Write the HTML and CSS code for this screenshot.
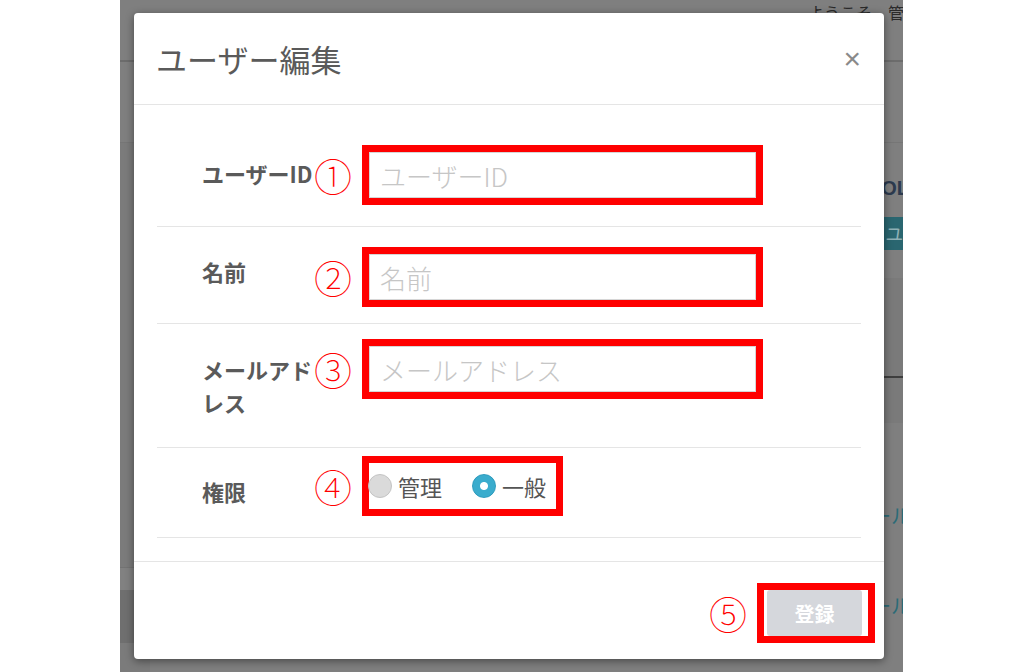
FILE: index.html
```html
<!DOCTYPE html>
<html lang="ja">
<head>
<meta charset="utf-8">
<title>ユーザー編集</title>
<link rel="stylesheet" href="styles.css">
</head>
<body>
<div class="frame">
  <div class="bgpage">
    <div class="bg-head"><span class="welcome">ようこそ、管理者さん</span></div>
    <div class="bg-sub"></div>
    <div class="bg-main">
      <div class="bg-side">
        <div class="side-a"></div>
        <div class="side-b"></div>
        <div class="side-c"></div>
        <div class="side-d"></div>
      </div>
      <div class="bg-content">
        <div class="bg-titlebar"><span class="bg-title">USER CONTROL</span></div>
        <div class="bg-actions"><span class="bg-button">ユーザー追加</span></div>
        <div class="bg-panel"><div class="bg-field"></div></div>
        <div class="bg-table">
          <div class="bg-row"><span class="bg-link">メール</span></div>
          <div class="bg-row"><span class="bg-link">メール</span></div>
        </div>
      </div>
    </div>
  </div>

  <div class="overlay">
    <div class="modal">
      <div class="modal-header">
        <h1 class="modal-title">ユーザー編集</h1>
        <span class="close">×</span>
      </div>
      <div class="modal-body">
        <div class="row row-id">
          <label class="label">ユーザーID</label>
          <div class="field">
            <span class="num">①</span>
            <div class="mark mark-input"><input class="input" type="text" placeholder="ユーザーID"></div>
          </div>
        </div>
        <div class="row row-name">
          <label class="label">名前</label>
          <div class="field">
            <span class="num">②</span>
            <div class="mark mark-input"><input class="input" type="text" placeholder="名前"></div>
          </div>
        </div>
        <div class="row row-mail">
          <label class="label">メールアドレス</label>
          <div class="field">
            <span class="num">③</span>
            <div class="mark mark-input"><input class="input" type="text" placeholder="メールアドレス"></div>
          </div>
        </div>
        <div class="row row-role">
          <label class="label">権限</label>
          <div class="field">
            <span class="num">④</span>
            <div class="mark mark-radio">
              <label class="opt"><input class="radio" type="radio" name="role"><span>管理</span></label>
              <label class="opt"><input class="radio" type="radio" name="role" checked><span>一般</span></label>
            </div>
          </div>
        </div>
      </div>
      <div class="modal-footer">
        <span class="num">⑤</span>
        <div class="mark mark-btn"><button class="btn" type="button">登録</button></div>
      </div>
    </div>
  </div>
</div>
</body>
</html>
```

FILE: styles.css
```css
html, body {
  margin: 0;
  padding: 0;
  background: #ffffff;
}
body {
  font-family: "Noto Sans CJK JP", "Noto Sans", sans-serif;
  color: #555;
}
.frame {
  width: 783px;
  height: 672px;
  margin-left: 120px;
  display: grid;
  overflow: hidden;
}
.frame > * {
  grid-area: 1 / 1;
}

/* background page (already dimmed by the overlay) */
.bgpage {
  background: #7f7f7f;
  display: flex;
  flex-direction: column;
  overflow: hidden;
}
.bg-head {
  height: 62px;
  box-sizing: border-box;
  border-bottom: 2px solid #6c6c6c;
  display: flex;
  justify-content: flex-end;
}
.welcome {
  font-size: 16px;
  line-height: 20px;
  margin-top: 2px;
  margin-right: -65px;
  color: #2a2a2a;
  white-space: nowrap;
}
.bg-sub {
  height: 81px;
  box-sizing: border-box;
  border-bottom: 1px solid #767676;
}
.bg-main {
  flex: 1;
  display: flex;
}
.bg-side {
  width: 30px;
  display: flex;
  flex-direction: column;
}
.side-a { height: 424px; background: #7b7b7b; }
.side-b { height: 22px; background: #818181; border-top: 1px solid #737373; }
.side-c { height: 53px; background: #6f6f6f; }
.side-d { flex: 1; background: #7b7b7b; }
.bg-content {
  flex: 1;
  display: flex;
  flex-direction: column;
}
.bg-titlebar {
  height: 74px;
  display: flex;
  align-items: center;
  justify-content: flex-end;
  margin-right: -6px;
}
.bg-title {
  font-family: "Liberation Sans", sans-serif;
  font-weight: 700;
  font-size: 20px;
  color: #2c3a4e;
  margin-top: 16px;
  white-space: nowrap;
}
.bg-actions {
  display: flex;
  justify-content: flex-end;
  margin-right: -102px;
}
.bg-button {
  height: 33px;
  box-sizing: border-box;
  padding: 0 12px;
  background: #2a6670;
  color: #8fb0b5;
  font-size: 18px;
  line-height: 33px;
  white-space: nowrap;
}
.bg-panel {
  margin-top: 28px;
  height: 145px;
  background: #7a7a7a;
  display: flex;
  flex-direction: column;
  justify-content: flex-end;
}
.bg-field {
  margin: 0 -10px 45px 60px;
  height: 2px;
  background: #3e3e3e;
}
.bg-table {
  display: flex;
  flex-direction: column;
  margin-right: -8px;
}
.bg-row {
  height: 90px;
  display: flex;
  align-items: center;
  justify-content: flex-end;
}
.bg-row:first-child { margin-top: 47px; }
.bg-link {
  font-size: 20px;
  color: #2b6b77;
  white-space: nowrap;
}

/* overlay + modal */
.overlay {
  padding: 13px 0 0 14px;
}
.modal {
  width: 750px;
  height: 646px;
  background: #fff;
  border-radius: 4px;
  box-shadow: 0 2px 8px rgba(0, 0, 0, 0.45);
  display: flex;
  flex-direction: column;
}
.modal-header {
  height: 92px;
  box-sizing: border-box;
  border-bottom: 1px solid #e5e5e5;
  display: flex;
  align-items: center;
  justify-content: space-between;
  padding: 0 23px 0 22px;
}
.modal-title {
  margin: 0;
  font-size: 31px;
  font-weight: 400;
  line-height: 1;
  color: #5a5a5a;
}
.close {
  font-family: "Liberation Sans", sans-serif;
  font-size: 30px;
  font-weight: 400;
  line-height: 1;
  color: #8a8a8a;
}
.modal-body {
  padding: 0 23px 23px;
}
.row {
  display: flex;
  align-items: flex-start;
  border-bottom: 1px solid #e5e5e5;
}
.row-id { padding: 40px 0 21px; }
.row-name { padding: 20px 0 16px; }
.row-mail { padding: 15px 0 27px; }
.row-role { padding: 8px 0 21px; }

.label {
  width: 114px;
  margin-left: 45px;
  font-size: 22px;
  font-weight: 700;
  line-height: 33px;
  color: #5a5a5a;
}
.row-id .label { margin-top: 12px; }
.row-name .label { margin-top: 8px; }
.row-mail .label { margin-top: 14px; min-height: 67px; }
.row-role .label { margin-top: 19px; }

.field {
  display: flex;
  align-items: center;
  gap: 12px;
}
.num {
  width: 34px;
  display: flex;
  justify-content: center;
  font-size: 38px;
  font-weight: 100;
  line-height: 1;
  color: #ff0000;
  background: #fff;
}
.mark {
  box-sizing: border-box;
  height: 60px;
  border: 7px solid #ff0000;
}
.mark-input {
  width: 401px;
}
.input {
  display: block;
  width: 100%;
  height: 100%;
  box-sizing: border-box;
  margin: 0;
  border: 1px solid #d6d6d6;
  padding: 0 10px;
  font-family: inherit;
  font-size: 26px;
  font-weight: 300;
  color: #555;
  background: #fff;
  outline: none;
}
.input::placeholder {
  color: #c6c6c6;
}
.mark-radio {
  width: 201px;
  display: flex;
  align-items: center;
  gap: 31px;
  padding-bottom: 1px;
}
.opt {
  display: flex;
  align-items: center;
  gap: 6px;
  font-size: 22px;
  line-height: 1;
  color: #555;
}
.radio {
  appearance: none;
  -webkit-appearance: none;
  width: 24px;
  height: 24px;
  margin: 0 0 0 -1px;
  box-sizing: border-box;
  border-radius: 50%;
  background: #dadada;
  border: 1px solid #c4c4c4;
}
.radio:checked {
  background: radial-gradient(circle, #fff 0 3.5px, #3aaccd 4.5px);
  border-color: #2e9bbd;
}

.modal-footer {
  border-top: 1px solid #e5e5e5;
  display: flex;
  justify-content: flex-end;
  align-items: center;
  gap: 12px;
  padding: 21px 9px 16px;
}
.mark-btn {
  width: 118px;
  display: flex;
  padding: 0 6px 0 3px;
}
.btn {
  width: 95px;
  height: 100%;
  border: 0;
  border-radius: 3px;
  background: #d5d7dc;
  color: #fff;
  font-family: inherit;
  font-size: 20px;
  font-weight: 700;
  padding: 0;
}
```
